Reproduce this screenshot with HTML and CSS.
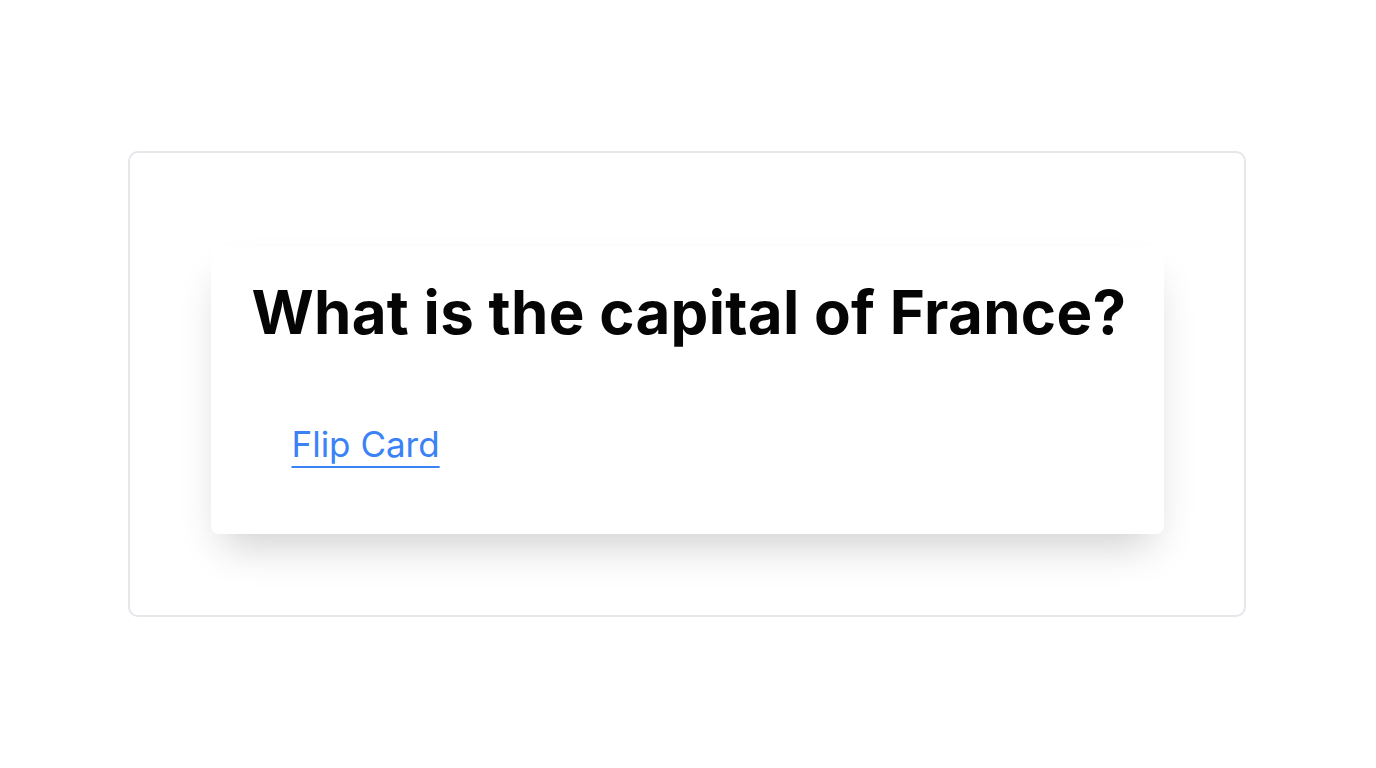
FILE: index.html
```html
<!DOCTYPE html>
<html lang="en">
<head>
<meta charset="utf-8">
<title>Flashcard</title>
<link rel="stylesheet" href="styles.css">
</head>
<body>
<main class="page">
  <section class="frame">
    <div class="card">
      <h1 class="question">What is the capital of France?</h1>
      <div class="actions">
        <a href="#" class="flip">Flip Card</a>
      </div>
    </div>
  </section>
</main>
</body>
</html>
```

FILE: styles.css
```css
* { box-sizing: border-box; }
html, body { margin: 0; padding: 0; background: #ffffff; }
body { font-family: Inter, "Noto Sans", sans-serif; }
.page {
  height: 768px;
  display: flex;
  align-items: center;
  justify-content: center;
  padding-right: 2px;
}
.frame {
  width: 1118px;
  height: 466px;
  border: 2px solid #e5e7eb;
  border-radius: 10px;
  display: flex;
  align-items: flex-start;
  justify-content: center;
  padding-top: 93px;
}
.card {
  width: 953px;
  height: 288px;
  background: #fff;
  border-radius: 8px;
  box-shadow: 0 22px 40px -12px rgba(0,0,0,0.2);
  padding: 36px 20px 0 41px;
}
.question {
  margin: 0;
  font-size: 60px;
  line-height: 60px;
  font-weight: 700;
  letter-spacing: 0.3px;
  white-space: nowrap;
  color: #050505;
}
.actions {
  margin-top: 81px;
  padding-left: 40px;
  line-height: 42px;
}
.flip {
  font-size: 35px;
  color: #3b82f6;
  text-decoration: underline;
  text-decoration-thickness: 2px;
  text-underline-offset: 9px;
}
```
